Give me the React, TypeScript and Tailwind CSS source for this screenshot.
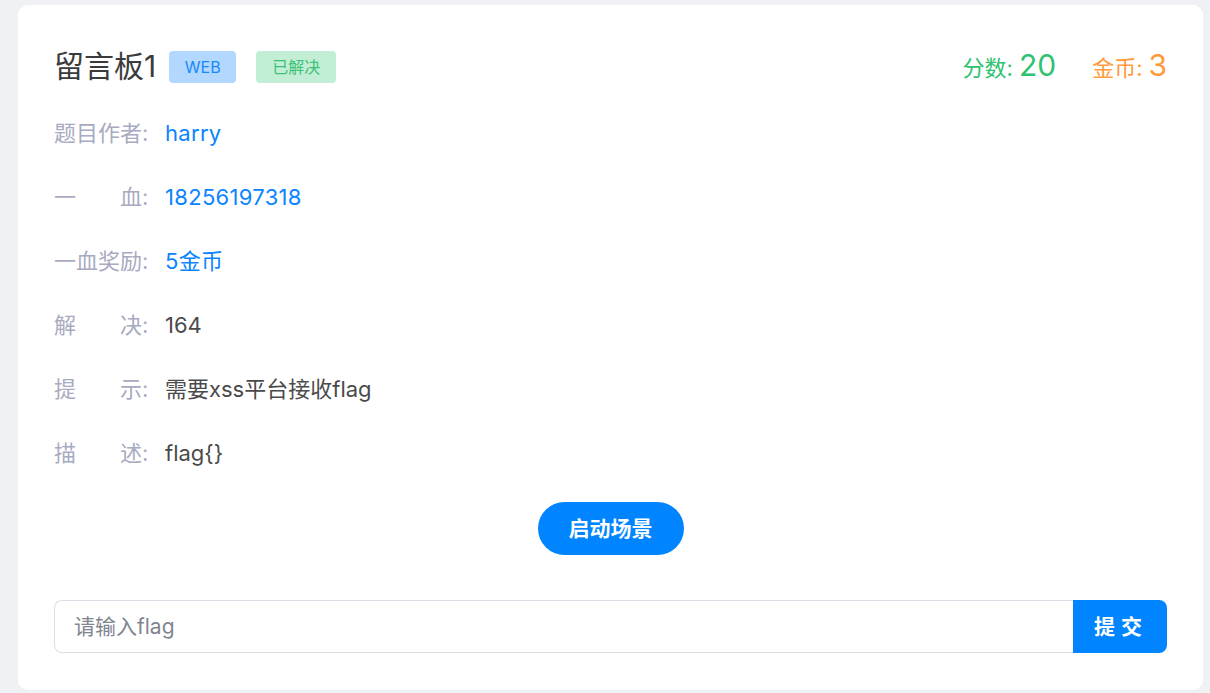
const font = { fontFamily: 'Inter, "Noto Sans CJK SC", sans-serif' };

const rows: { label: string; value: string; blue?: boolean }[] = [
  { label: "题目作者", value: "harry", blue: true },
  { label: "一血", value: "18256197318", blue: true },
  { label: "一血奖励", value: "5金币", blue: true },
  { label: "解决", value: "164" },
  { label: "提示", value: "需要xss平台接收flag" },
  { label: "描述", value: "flag{}" },
];

const InfoRow = ({ label, value, blue }: { label: string; value: string; blue?: boolean }) => (
  <div className="flex h-16 items-center text-[22px]">
    <span className="flex w-[111px] shrink-0 text-[#a8aabf]">
      <span className="inline-block w-[88px] text-justify [text-align-last:justify]">{label}</span>
      <span>:</span>
    </span>
    <span className={blue ? "text-[#0a84ff] tracking-[0.3px]" : "text-[#4a4a4a]"}>{value}</span>
  </div>
);

export default function App() {
  return (
    <div className="min-h-[693px] bg-[#f0f1f4] pt-[5px] pl-[18px]" style={font}>
      <div className="h-[685px] w-[1185px] rounded-[10px] bg-white px-9 pt-[46px]">
        <div className="flex h-8 items-center justify-between">
          <div className="flex items-center">
            <h1 className="-mt-[3px] text-[30px] leading-8 text-[#3b3b3b]">留言板1</h1>
            <span className="ml-[13px] flex h-8 w-[67px] items-center justify-center rounded-[4px] bg-[#b3d8ff] text-[16px] text-[#1989fa]">
              WEB
            </span>
            <span className="ml-5 flex h-8 w-20 items-center justify-center rounded-[4px] bg-[#c2eed5] text-[16px] text-[#3cc177]">
              已解决
            </span>
          </div>
          <div className="-mt-[3px] flex items-baseline">
            <span className="text-[22px] text-[#2fc271]">分数:</span>
            <span className="ml-[6px] text-[30px] text-[#2fc271]">20</span>
            <span className="ml-9 text-[22px] text-[#ff9a3d]">金币:</span>
            <span className="ml-[6px] text-[30px] text-[#ff9a3d]">3</span>
          </div>
        </div>

        <div className="mt-[18px]">
          {rows.map((r) => (
            <InfoRow key={r.label} {...r} />
          ))}
        </div>

        <div className="mt-[17px] flex justify-center">
          <button className="h-[53px] w-[146px] rounded-full bg-[#0084ff] text-[21px] font-bold text-white">
            启动场景
          </button>
        </div>

        <div className="mt-[45px] flex h-[53px]">
          <input
            placeholder="请输入flag"
            className="h-full flex-1 rounded-l-[8px] border border-r-0 border-[#dcdfe6] pl-[19px] pr-5 text-[21px] text-[#333] outline-none placeholder:text-[#80858f]"
          />
          <button className="h-full w-[94px] rounded-r-[8px] bg-[#0084ff] pl-[2px] text-[21px] font-bold tracking-[6px] text-white">
            提交
          </button>
        </div>
      </div>
    </div>
  );
}
